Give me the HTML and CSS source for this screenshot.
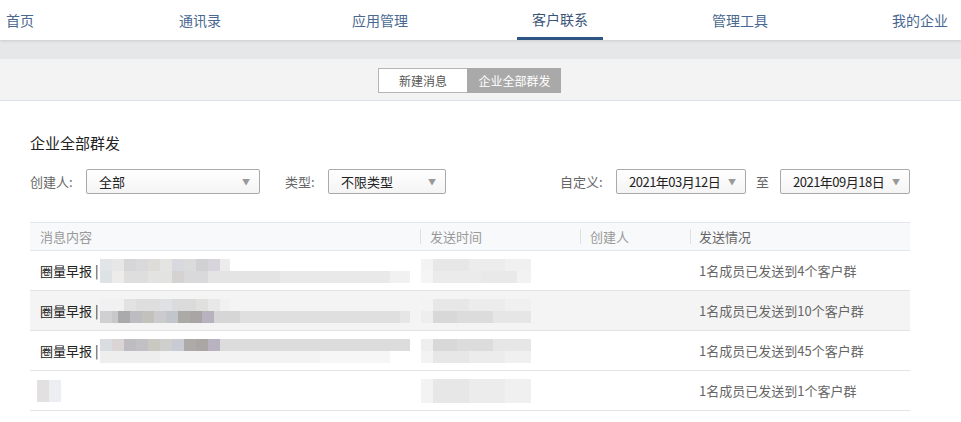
FILE: index.html
```html
<!DOCTYPE html>
<html lang="zh-CN">
<head>
  <meta charset="UTF-8">
  <title>企业全部群发</title>
  <link rel="stylesheet" href="styles.css">
</head>
<body>

<div class="nav">
  <div class="nav-inner">
    <a class="nav-item">首页</a>
    <a class="nav-item">通讯录</a>
    <a class="nav-item">应用管理</a>
    <a class="nav-item active"><span>客户联系</span></a>
    <a class="nav-item">管理工具</a>
    <a class="nav-item">我的企业</a>
  </div>
</div>

<div class="band"></div>

<div class="tabs">
  <div class="seg">
    <span class="seg-btn">新建消息</span>
    <span class="seg-btn on">企业全部群发</span>
  </div>
</div>

<div class="main">
  <h2 class="title">企业全部群发</h2>

  <div class="filters">
    <div class="group">
      <label class="l-creator">创建人:</label>
      <div class="select w-creator"><span>全部</span><i class="arrow">▼</i></div>
      <label class="l-type">类型:</label>
      <div class="select w-type"><span>不限类型</span><i class="arrow">▼</i></div>
    </div>
    <div class="group">
      <label class="l-date">自定义:</label>
      <div class="select w-date"><span>2021年03月12日</span><i class="arrow">▼</i></div>
      <span class="to">至</span>
      <div class="select w-date"><span>2021年09月18日</span><i class="arrow">▼</i></div>
    </div>
  </div>

  <div class="table">
    <div class="row head">
      <div class="c c1">消息内容</div>
      <div class="c c2">发送时间</div>
      <div class="c c3">创建人</div>
      <div class="c c4">发送情况</div>
    </div>

    <div class="row">
      <div class="c c1"><b>圈量早报 |</b>
        <span class="mos"><span class="m-top t1"></span><span class="m-bot b1"></span></span>
      </div>
      <div class="c c2"><span class="mos time"><span class="m-top tt"></span><span class="m-bot tb"></span></span></div>
      <div class="c c3"></div>
      <div class="c c4">1名成员已发送到4个客户群</div>
    </div>

    <div class="row alt">
      <div class="c c1"><b>圈量早报 |</b>
        <span class="mos"><span class="m-top t2"></span><span class="m-bot b2"></span></span>
      </div>
      <div class="c c2"><span class="mos time"><span class="m-top tt"></span><span class="m-bot tb2"></span></span></div>
      <div class="c c3"></div>
      <div class="c c4">1名成员已发送到10个客户群</div>
    </div>

    <div class="row">
      <div class="c c1"><b>圈量早报 |</b>
        <span class="mos"><span class="m-top t3"></span><span class="m-bot b3"></span></span>
      </div>
      <div class="c c2"><span class="mos time"><span class="m-top tb2"></span><span class="m-bot tt"></span></span></div>
      <div class="c c3"></div>
      <div class="c c4">1名成员已发送到45个客户群</div>
    </div>

    <div class="row">
      <div class="c c1"><span class="mos small"></span></div>
      <div class="c c2"><span class="mos time"><span class="m-top tt"></span><span class="m-bot tt"></span></span></div>
      <div class="c c3"></div>
      <div class="c c4">1名成员已发送到1个客户群</div>
    </div>
  </div>
</div>

</body>
</html>
```

FILE: styles.css
```css
* {
	margin: 0;
	padding: 0;
	box-sizing: border-box;
}

body {
	font-family: "Noto Sans CJK SC", "Liberation Sans", sans-serif;
	font-size: 13px;
	color: #333;
	background: #fff;
	overflow: hidden;
}

/* top nav */
.nav {
	height: 40px;
	background: #fff;
	overflow: hidden;
	position: relative;
	z-index: 2;
	box-shadow: 0 1px 3px rgba(0, 0, 0, 0.12);
}

.nav-inner {
	display: grid;
	grid-template-columns: repeat(6, 180px);
	margin-left: -70px;
	height: 40px;
}

.nav-item {
	display: flex;
	justify-content: center;
	height: 40px;
	line-height: 40px;
	font-size: 14px;
	color: #4a6890;
}

.nav-item.active span {
	display: block;
	padding: 0 15px;
	color: #3a5478;
	border-bottom: 3px solid #2e5582;
	height: 40px;
	line-height: 38px;
}

.band {
	height: 19px;
	background: #e6e7e9;
}

/* segmented tabs */
.tabs {
	height: 42px;
	background: #f3f3f3;
	border-bottom: 1px solid #dde2e8;
	display: flex;
	justify-content: center;
	padding-top: 9px;
	padding-right: 22px;
}

.seg {
	display: flex;
	height: 25px;
}

.seg-btn {
	width: 89px;
	line-height: 23px;
	text-align: center;
	font-size: 12px;
	color: #555;
	background: #fff;
	border: 1px solid #b5b5b5;
	border-right: none;
}

.seg-btn.on {
	width: 94px;
	background: #a9a9a9;
	border-color: #a9a9a9;
	color: #fff;
}

/* main */
.main {
	padding: 0 51px 0 30px;
}

.title {
	font-size: 15px;
	font-weight: normal;
	color: #222;
	margin-top: 32px;
	line-height: 20px;
}

.filters {
	display: flex;
	justify-content: space-between;
	margin-top: 16px;
	height: 25px;
}

.group {
	display: flex;
	align-items: center;
}

.group label {
	color: #666;
}

.l-creator { width: 56px; }
.l-type { width: 43px; margin-left: 25px; }
.l-date { width: 56px; }

.to {
	color: #666;
	margin: 0 11px 0 10px;
}

.select {
	height: 25px;
	border: 1px solid #aaa;
	border-radius: 2px;
	background: linear-gradient(#fff, #f4f4f4);
	display: flex;
	align-items: center;
	justify-content: space-between;
	padding: 0 9px 0 12px;
	color: #222;
}

.select .arrow {
	font-style: normal;
	font-size: 8px;
	color: #999;
}

.w-creator { width: 174px; }
.w-type { width: 118px; }
.w-date { width: 130px; }
.w-date span { letter-spacing: -0.5px; }

/* table */
.table {
	margin-top: 28px;
	border-top: 1px solid #e3e6ea;
}

.row {
	display: flex;
	height: 40px;
	border-bottom: 1px solid #e3e3e3;
	align-items: center;
}

.row.head {
	height: 28px;
	background: #f8f9fb;
	border-bottom-color: #e3e6ea;
	color: #999;
}

.row.alt {
	background: #f4f4f4;
}

.c {
	padding-left: 10px;
	display: flex;
	align-items: center;
	height: 100%;
	white-space: nowrap;
	position: relative;
}

.head .c + .c::before {
	content: "";
	position: absolute;
	left: 0;
	top: 6px;
	bottom: 6px;
	border-left: 1px solid #e0e0e0;
}

.c1 { width: 390px; }
.c2 { width: 160px; }
.c3 { width: 110px; }
.c4 { width: 220px; padding-left: 9px; color: #666; }

.c1 b {
	font-weight: normal;
	color: #222;
}

/* blurred content */
.mos {
	display: flex;
	flex-direction: column;
	margin-left: 2px;
}

.m-top, .m-bot {
	display: block;
	height: 12px;
}

.m-top { width: 130px; }
.m-bot { width: 310px; }

.t1 {
	background: linear-gradient(90deg, #e1e5e8 0 12px, #e8e7e7 12px 24px, #d6d6d9 24px 36px, #d9d8da 36px 48px,
		#dddcd9 48px 60px, #e4e4e2 60px 72px, #d8d9de 72px 84px, #dbdbdb 84px 96px, #d1d1d4 96px 108px, #d7d4db 108px 120px, #ececec 120px);
}
.b1 {
	background: linear-gradient(90deg, #dde2e5 0 12px, #eeecea 12px 24px, #dedede 24px 48px, #e3e3e1 48px 72px,
		#d5d3d1 72px 84px, #d9d8db 84px 108px, #e4e4e4 108px 180px, #e9e9e9 180px 290px, #f1f1f1 290px);
}
.t2 {
	background: linear-gradient(90deg, #f1f1f1 0 24px, #e2e2e3 24px 36px, #dedede 36px 60px, #e0e1e4 60px 72px,
		#dbdbdb 72px 96px, #e0e0df 96px 108px, #e8e8e8 108px 120px, #f1f1f1 120px);
}
.b2 {
	background: linear-gradient(90deg, #d0d0d2 0 12px, #c8c8ca 12px 18px, #abaaab 18px 30px, #bdbdc1 30px 42px,
		#c2c1bc 42px 54px, #cbcacc 54px 66px, #c2c5cc 66px 78px, #acaaa7 78px 90px, #a8a6a4 90px 102px, #b7b2bd 102px 114px,
		#d6d6d6 114px 140px, #dfdfdf 140px 300px, #e6e6e6 300px);
}
.t3 {
	width: 310px;
	background: linear-gradient(90deg, #d9dde1 0 12px, #dad5d4 12px 24px, #bebcc0 24px 36px, #c1c1c4 36px 48px,
		#c9c8c1 48px 60px, #cfcfce 60px 72px, #c8cad4 72px 84px, #adaaa8 84px 96px, #a9a6a3 96px 108px, #b9b3c1 108px 120px, #dcdcdc 120px);
}
.b3 {
	width: 290px;
	background: linear-gradient(90deg, #eeeeee 0 60px, #f3f3f3 60px 220px, #f6f6f6 220px);
}

.mos.time {
	margin-left: -9px;
}
.mos.time .m-top, .mos.time .m-bot { width: 110px; }
.tt { background: linear-gradient(90deg, #f3f3f3 0 12px, #e7e7e7 12px 48px, #ececec 48px 84px, #f0f0f0 84px); }
.tb { background: linear-gradient(90deg, #f5f5f5 0 12px, #ebebeb 12px 60px, #e9e9e9 60px 96px, #f2f2f2 96px); }
.tb2 { background: linear-gradient(90deg, #eeeeee 0 12px, #d8d8d8 12px 36px, #dcdcdc 36px 72px, #e6e6e6 72px); }

.mos.small {
	margin-left: -3px;
	width: 24px;
	height: 22px;
	background: linear-gradient(90deg, #e2e0e0 0 12px, #eceef1 12px);
}
```
